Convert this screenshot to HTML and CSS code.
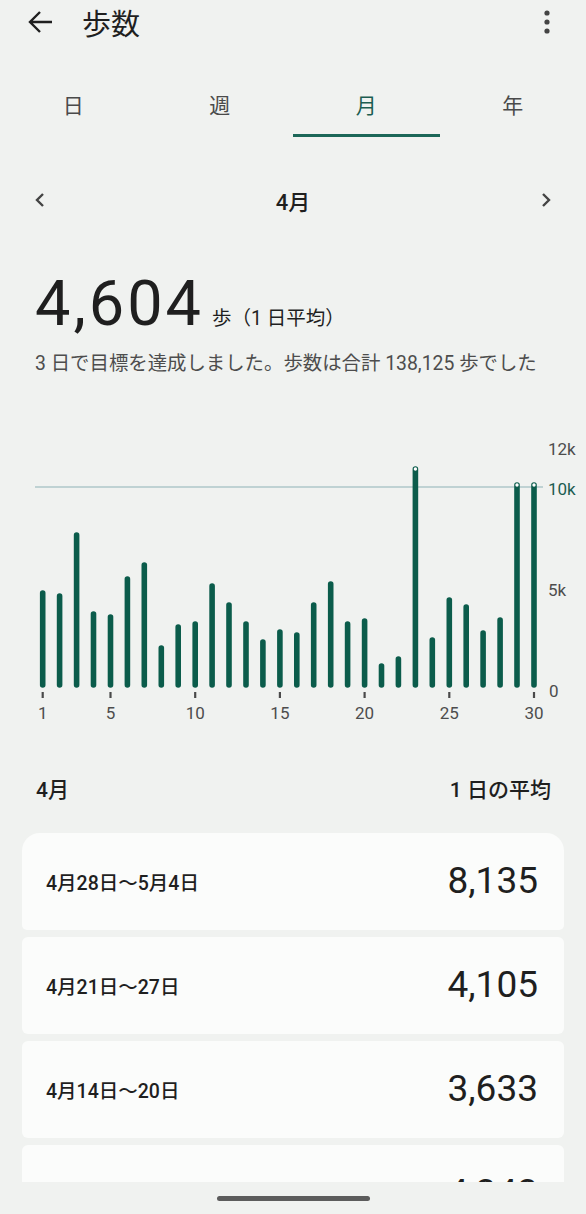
FILE: index.html
```html
<!DOCTYPE html>
<html lang="ja">
<head>
    <meta charset="UTF-8">
    <meta name="viewport" content="width=device-width, initial-scale=1.0">
    <title>歩数</title>
    <link rel="stylesheet" href="styles.css">
</head>
<body>
<div class="screen">
    <div class="content">
        <div class="topbar">
            <svg class="back" width="26" height="24" viewBox="0 0 26 24">
                <path d="M24 12H3M12 2L2 12l10 10" fill="none" stroke="#1f1f1f" stroke-width="2.4"/>
            </svg>
            <h1 class="title">歩数</h1>
            <svg class="kebab" width="8" height="26" viewBox="0 0 8 26">
                <circle cx="4" cy="4" r="2.6" fill="#444"/>
                <circle cx="4" cy="13" r="2.6" fill="#444"/>
                <circle cx="4" cy="22" r="2.6" fill="#444"/>
            </svg>
        </div>

        <div class="tabs">
            <div class="tab">日</div>
            <div class="tab">週</div>
            <div class="tab active">月</div>
            <div class="tab">年</div>
        </div>

        <div class="period">
            <svg width="12" height="16" viewBox="0 0 12 16"><path d="M9 2L3 8l6 6" fill="none" stroke="#444" stroke-width="2.4"/></svg>
            <span class="period-name">4月</span>
            <svg width="12" height="16" viewBox="0 0 12 16"><path d="M3 2l6 6-6 6" fill="none" stroke="#444" stroke-width="2.4"/></svg>
        </div>

        <div class="summary">
            <div class="total">
                <span class="big">4,604</span>
                <span class="unit">歩（1 日平均）</span>
            </div>
            <p class="note">3 日で目標を達成しました。歩数は合計 138,125 歩でした</p>
        </div>

        <svg class="chart" width="586" height="310" viewBox="0 420 586 310">
            <line x1="35" y1="487" x2="543" y2="487" stroke="#bfd2d3" stroke-width="2"/>
            <g class="bars" stroke="#0b5c4b" stroke-width="5.6" stroke-linecap="round">
                <line x1="42.7" y1="685" x2="42.7" y2="593"/>
                <line x1="59.6" y1="685" x2="59.6" y2="596"/>
                <line x1="76.6" y1="685" x2="76.6" y2="535"/>
                <line x1="93.5" y1="685" x2="93.5" y2="614"/>
                <line x1="110.5" y1="685" x2="110.5" y2="617"/>
                <line x1="127.4" y1="685" x2="127.4" y2="579"/>
                <line x1="144.3" y1="685" x2="144.3" y2="565"/>
                <line x1="161.3" y1="685" x2="161.3" y2="648"/>
                <line x1="178.2" y1="685" x2="178.2" y2="627"/>
                <line x1="195.2" y1="685" x2="195.2" y2="624"/>
                <line x1="212.1" y1="685" x2="212.1" y2="586"/>
                <line x1="229" y1="685" x2="229" y2="605"/>
                <line x1="246" y1="685" x2="246" y2="624"/>
                <line x1="262.9" y1="685" x2="262.9" y2="642"/>
                <line x1="279.9" y1="685" x2="279.9" y2="632"/>
                <line x1="296.8" y1="685" x2="296.8" y2="635"/>
                <line x1="313.7" y1="685" x2="313.7" y2="605"/>
                <line x1="330.7" y1="685" x2="330.7" y2="584"/>
                <line x1="347.6" y1="685" x2="347.6" y2="624"/>
                <line x1="364.6" y1="685" x2="364.6" y2="621"/>
                <line x1="381.5" y1="685" x2="381.5" y2="666"/>
                <line x1="398.4" y1="685" x2="398.4" y2="659"/>
                <line x1="415.4" y1="685" x2="415.4" y2="469"/>
                <line x1="432.3" y1="685" x2="432.3" y2="640"/>
                <line x1="449.3" y1="685" x2="449.3" y2="600"/>
                <line x1="466.2" y1="685" x2="466.2" y2="607"/>
                <line x1="483.1" y1="685" x2="483.1" y2="633"/>
                <line x1="500.1" y1="685" x2="500.1" y2="620"/>
                <line x1="517" y1="685" x2="517" y2="485"/>
                <line x1="534" y1="685" x2="534" y2="485"/>
            </g>
            <g class="goal" fill="#ffffff">
                <circle cx="415.4" cy="469" r="1.7"/>
                <circle cx="517" cy="485" r="1.7"/>
                <circle cx="534" cy="485" r="1.7"/>
            </g>
            <g class="ticks" stroke="#4a4a4a" stroke-width="2.2">
                <line x1="42.7" y1="692" x2="42.7" y2="698"/>
                <line x1="110.5" y1="692" x2="110.5" y2="698"/>
                <line x1="195.2" y1="692" x2="195.2" y2="698"/>
                <line x1="279.9" y1="692" x2="279.9" y2="698"/>
                <line x1="364.6" y1="692" x2="364.6" y2="698"/>
                <line x1="449.3" y1="692" x2="449.3" y2="698"/>
                <line x1="534" y1="692" x2="534" y2="698"/>
            </g>
            <g class="xlabels" text-anchor="middle">
                <text x="42.7" y="719">1</text>
                <text x="110.5" y="719">5</text>
                <text x="195.2" y="719">10</text>
                <text x="279.9" y="719">15</text>
                <text x="364.6" y="719">20</text>
                <text x="449.3" y="719">25</text>
                <text x="534" y="719">30</text>
            </g>
            <g class="ylabels">
                <text x="548" y="455">12k</text>
                <text x="548" y="495" class="goal-label">10k</text>
                <text x="548" y="596">5k</text>
                <text x="549" y="697">0</text>
            </g>
        </svg>

        <div class="list-head">
            <span>4月</span>
            <span>1 日の平均</span>
        </div>

        <div class="weeks">
            <div class="week first">
                <span class="range">4月28日～5月4日</span>
                <span class="avg">8,135</span>
            </div>
            <div class="week">
                <span class="range">4月21日～27日</span>
                <span class="avg">4,105</span>
            </div>
            <div class="week">
                <span class="range">4月14日～20日</span>
                <span class="avg">3,633</span>
            </div>
            <div class="week">
                <span class="range">4月7日～13日</span>
                <span class="avg">4,343</span>
            </div>
        </div>
    </div>

    <div class="gesture"><div class="pill"></div></div>
</div>
</body>
</html>
```

FILE: styles.css
```css
* {
    margin: 0;
    padding: 0;
    box-sizing: border-box;
}
body {
    background-color: #f0f2f0;
    font-family: Roboto, "Noto Sans CJK JP", sans-serif;
    color: #1f1f1f;
}
.screen {
    width: 586px;
    height: 1214px;
    display: flex;
    flex-direction: column;
}
.content {
    flex: 1;
    overflow: hidden;
}

/* top bar */
.topbar {
    height: 46px;
    display: flex;
    align-items: center;
    padding: 0 35px 0 28px;
}
.back { margin-top: -2px; }
.title {
    flex: 1;
    margin-left: 28px;
    font-size: 29px;
    font-weight: 400;
    line-height: 46px;
    padding-top: 3px;
}
.kebab { margin-top: -2px; }

/* tabs */
.tabs {
    display: grid;
    grid-template-columns: repeat(4, 1fr);
}
.tab {
    height: 91px;
    padding-top: 28px;
    display: flex;
    align-items: center;
    justify-content: center;
    font-size: 21px;
    color: #4a4a4a;
    border-bottom: 3px solid transparent;
}
.tab.active {
    color: #1c5d51;
    border-bottom-color: #1c6758;
}

/* period selector */
.period {
    margin-top: 40px;
    height: 46px;
    display: flex;
    align-items: center;
    justify-content: space-between;
    padding: 0 34px;
}
.period-name {
    font-size: 22px;
    font-weight: 500;
}

/* summary */
.summary { padding: 50px 35px 0 35px; }
.total {
    display: flex;
    align-items: baseline;
}
.big {
    font-size: 63px;
    line-height: 62px;
    letter-spacing: 3px;
}
.unit {
    margin-left: 8px;
    font-size: 19.5px;
}
.note {
    margin-top: 16px;
    font-size: 19.4px;
    line-height: 26px;
    color: #4d4d4d;
    white-space: nowrap;
}

/* chart */
.chart {
    display: block;
    margin-top: 43px;
}
.chart text {
    font-family: Roboto, sans-serif;
    font-size: 17px;
    fill: #4d4d4d;
}
.chart .goal-label { fill: #1c5d51; }

/* weekly list */
.list-head {
    margin-top: 47px;
    display: flex;
    justify-content: space-between;
    padding: 0 35px 0 36px;
    font-size: 21px;
    font-weight: 500;
    line-height: 26px;
}
.weeks {
    margin: 30px 22px 0 22px;
    display: flex;
    flex-direction: column;
    gap: 7px;
}
.week {
    height: 97px;
    display: flex;
    align-items: center;
    justify-content: space-between;
    padding: 0 26px 0 24px;
    background-color: #fbfcfb;
    border-radius: 6px;
}
.week.first { border-radius: 18px 18px 5px 5px; }
.range {
    font-size: 19.5px;
    font-weight: 500;
}
.avg {
    font-size: 37px;
    padding-bottom: 2px;
}

/* gesture bar */
.gesture {
    height: 32px;
    display: flex;
    justify-content: center;
    padding-top: 14px;
}
.pill {
    width: 153px;
    height: 5px;
    border-radius: 3px;
    background-color: #5c5c5c;
}
```
